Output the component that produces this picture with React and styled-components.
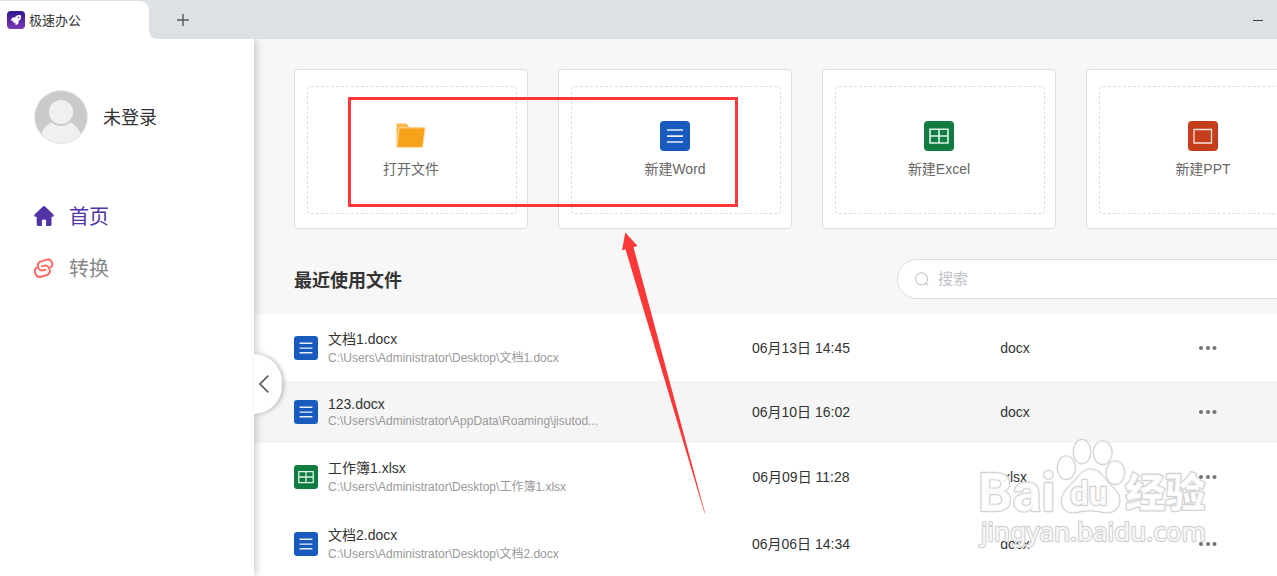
import { useState } from "react";
import { createGlobalStyle, styled } from "styled-components";
import { FaRocket } from "react-icons/fa";

const cards = [
  { type: "folder", label: "打开文件" },
  { type: "word", label: "新建Word" },
  { type: "excel", label: "新建Excel" },
  { type: "ppt", label: "新建PPT" },
];

const files = [
  {
    type: "word",
    name: "文档1.docx",
    path: "C:\\Users\\Administrator\\Desktop\\文档1.docx",
    date: "06月13日 14:45",
    ext: "docx",
  },
  {
    type: "word",
    name: "123.docx",
    path: "C:\\Users\\Administrator\\AppData\\Roaming\\jisutod...",
    date: "06月10日 16:02",
    ext: "docx",
    compact: true,
  },
  {
    type: "excel",
    name: "工作簿1.xlsx",
    path: "C:\\Users\\Administrator\\Desktop\\工作簿1.xlsx",
    date: "06月09日 11:28",
    ext: "xlsx",
  },
  {
    type: "word",
    name: "文档2.docx",
    path: "C:\\Users\\Administrator\\Desktop\\文档2.docx",
    date: "06月06日 14:34",
    ext: "docx",
  },
];

const FileIcon = ({ type, size }) => (
  <StyledIcon width={size} height={size} viewBox="0 0 30 30" aria-hidden="true">
    {type === "folder" && (
      <>
        <path d="M0.5 2.5H10.5L13 6H27V20L26 26.5H0.5Z" fill="#f9b44d" />
        <path
          d="M3 6.8H29.2L26.6 26.3H0.9Z"
          fill="#f6a21b"
          stroke="#fddca6"
          strokeWidth="1"
        />
      </>
    )}
    {type === "word" && (
      <>
        <rect width="30" height="30" rx="4" fill="#185abd" />
        <path
          d="M7 9H23M7 15.2H23M7 21H23"
          stroke="#e8effa"
          strokeWidth="1.7"
        />
      </>
    )}
    {type === "excel" && (
      <>
        <rect width="30" height="30" rx="4" fill="#107c41" />
        <path
          d="M6 8.2H24V22H6ZM15 8V22M6 15H24"
          fill="none"
          stroke="#dff3e7"
          strokeWidth="1.6"
        />
      </>
    )}
    {type === "ppt" && (
      <>
        <rect width="30" height="30" rx="4" fill="#c43e1c" />
        <path
          d="M6 8.5H23.5V22H6Z"
          fill="none"
          stroke="#fbe3da"
          strokeWidth="1.3"
        />
      </>
    )}
  </StyledIcon>
);

const HomeIcon = () => (
  <StyledIcon width="20" height="20" viewBox="0 0 20 20" aria-hidden="true">
    <path
      d="M8.9 0.5Q10 -0.3 11.1 0.5L19.4 8.5Q20.4 10.6 18.4 10.8H17.5V18.6Q17.5 20 16.2 20H12.1V14.6Q12.1 13.6 10 13.6Q7.9 13.6 7.9 14.6V20H4Q2.7 20 2.7 18.6V10.8H1.6Q-0.4 10.6 0.6 8.5Z"
      fill="#5233a3"
    />
  </StyledIcon>
);

const LinkIcon = () => (
  <StyledIcon width="20" height="20" viewBox="0 0 60 60" aria-hidden="true">
    <g fill="none" stroke="#ff6b64" strokeWidth="6" strokeLinecap="round">
      <path d="M50 28C56 25 56 17 52 10C49 4 44 3 37 5L21 10C13 13 10 19 12 27C14 35 20 39 27 37L34 35" />
      <path d="M8 29C2 33 1 39 4 46C7 55 13 58 21 56L36 52C45 49 49 42 47 35C45 26 38 21 30 23L24 25" />
    </g>
  </StyledIcon>
);

const Avatar = () => (
  <StyledIcon width="54" height="54" viewBox="0 0 54 54" aria-hidden="true">
    <clipPath id="face">
      <circle cx="27" cy="27" r="26" />
    </clipPath>
    <circle cx="27" cy="27" r="27" fill="#e8e8e8" />
    <g clipPath="url(#face)">
      <rect width="54" height="54" fill="#cacaca" />
      <ellipse cx="27" cy="51" rx="21" ry="21" fill="#f0f0f0" />
      <circle cx="27" cy="22" r="14" fill="#cacaca" />
      <circle cx="27" cy="22" r="12" fill="#f0f0f0" />
    </g>
  </StyledIcon>
);

const Watermark = () => (
  <StyledWatermark viewBox="30 45 720 345">
    <g
      fill="#fff"
      fillOpacity="0.85"
      stroke="#d2d2d2"
      strokeWidth="7"
      strokeLinejoin="round"
      paintOrder="stroke"
    >
      <text x="54" y="274" fontFamily="Roboto" fontSize="162" fontWeight="700">
        Bai
      </text>
      <ellipse cx="319" cy="143" rx="26" ry="34" />
      <ellipse cx="366" cy="95" rx="25" ry="35" />
      <ellipse cx="428" cy="98" rx="27" ry="34" />
      <ellipse cx="466" cy="158" rx="27" ry="34" />
      <path d="M392 148C365 148 352 178 330 198C310 216 304 235 306 250C310 274 328 280 350 276C375 270 405 270 430 276C460 282 476 265 478 245C480 225 468 212 450 195C430 175 420 148 392 148Z" />
      <text x="330" y="256" fontFamily="Roboto" fontSize="100" fontWeight="700">
        du
      </text>
      <text
        x="496"
        y="262"
        fontFamily="Noto Sans CJK SC"
        fontSize="120"
        fontWeight="900"
      >
        经验
      </text>
      <text
        x="62"
        y="363"
        fontFamily="Noto Sans"
        fontSize="78"
        fontWeight="400"
      >
        jingyan.baidu.com
      </text>
    </g>
  </StyledWatermark>
);

const App = () => {
  const [keyword, setKeyword] = useState("");

  return (
    <StyledApp>
      <GlobalStyle />
      <StyledTabBar>
        <StyledTab>
          <StyledLogo>
            <FaRocket size={10} />
          </StyledLogo>
          <StyledTabTitle>极速办公</StyledTabTitle>
        </StyledTab>
        <StyledBarButton aria-label="新建标签">
          <svg width="12" height="12" viewBox="0 0 12 12">
            <path d="M6 0V12M0 6H12" stroke="#55585c" strokeWidth="1.4" />
          </svg>
        </StyledBarButton>
        <StyledMinimize aria-label="最小化">
          <svg width="10" height="1" viewBox="0 0 10 1">
            <rect width="10" height="1" fill="#3c3f43" />
          </svg>
        </StyledMinimize>
      </StyledTabBar>

      <StyledBody>
        <StyledSidebar>
          <StyledUser>
            <Avatar />
            <span>未登录</span>
          </StyledUser>
          <StyledNav>
            <StyledNavLink href="#home" $active>
              <HomeIcon />
              <span>首页</span>
            </StyledNavLink>
            <StyledNavLink href="#convert">
              <LinkIcon />
              <span>转换</span>
            </StyledNavLink>
          </StyledNav>
          <StyledToggle aria-label="收起">
            <svg width="10" height="18" viewBox="0 0 10 18">
              <path
                d="M9.3 0.6L1 9L9.3 17.4"
                fill="none"
                stroke="#5a5a5a"
                strokeWidth="1.6"
              />
            </svg>
          </StyledToggle>
        </StyledSidebar>

        <StyledMain>
          <StyledCards>
            {cards.map((card) => (
              <StyledCard key={card.type}>
                <StyledCardInner>
                  <FileIcon type={card.type} size={30} />
                  <span>{card.label}</span>
                </StyledCardInner>
              </StyledCard>
            ))}
          </StyledCards>

          <StyledRecent>
            <StyledHeading>最近使用文件</StyledHeading>
            <StyledSearch>
              <svg width="14" height="14" viewBox="0 0 14 14">
                <g fill="none" stroke="#c3c5ca" strokeWidth="1.1">
                  <circle cx="6.6" cy="6.8" r="6" />
                  <path d="M10.8 11.2L13.4 13.6" />
                </g>
              </svg>
              <StyledInput
                type="text"
                aria-label="搜索"
                placeholder="搜索"
                value={keyword}
                onChange={(ev) => setKeyword(ev.target.value)}
              />
            </StyledSearch>
          </StyledRecent>

          <StyledTable>
            <colgroup>
              <StyledCol $width="440px" />
              <StyledCol $width="214px" />
              <StyledCol $width="214px" />
              <StyledCol $width="172px" />
              <col />
            </colgroup>
            <tbody>
              {files
                .filter((file) => file.name.includes(keyword))
                .map((file) => (
                  <StyledRow key={file.name} $hovered={file.compact}>
                    <td>
                      <StyledFile>
                        <FileIcon type={file.type} size={24} />
                        <div>
                          <StyledName $compact={file.compact}>
                            {file.name}
                          </StyledName>
                          <StyledPath $compact={file.compact}>
                            {file.path}
                          </StyledPath>
                        </div>
                      </StyledFile>
                    </td>
                    <StyledCell>{file.date}</StyledCell>
                    <StyledCell>{file.ext}</StyledCell>
                    <StyledCell>
                      <StyledMore aria-label="更多">
                        <svg width="18" height="4" viewBox="0 0 18 4">
                          <g fill="#737373">
                            <circle cx="2" cy="2" r="2" />
                            <circle cx="9" cy="2" r="2" />
                            <circle cx="15.5" cy="2" r="2" />
                          </g>
                        </svg>
                      </StyledMore>
                    </StyledCell>
                    <td />
                  </StyledRow>
                ))}
            </tbody>
          </StyledTable>
        </StyledMain>
      </StyledBody>

      <StyledHighlight />
      <StyledArrow viewBox="0 0 84 282">
        <path
          d="M4.3 0.5L1 18.5L4.5 17.3L83.7 281.5L84 281L12.5 15.2L16.5 14Z"
          fill="#fd3838"
        />
      </StyledArrow>
      <Watermark />
    </StyledApp>
  );
};

const GlobalStyle = createGlobalStyle`
  * {
    box-sizing: border-box;
  }

  body {
    margin: 0;
    font-family: "Liberation Sans", "Noto Sans CJK SC", sans-serif;
    font-size: 14px;
    color: #333;
  }

  button {
    font: inherit;
    border: none;
    background: none;
    padding: 0;
    cursor: pointer;
  }
`;

const StyledApp = styled.div`
  position: relative;
  display: flex;
  flex-direction: column;
  height: 100vh;
  overflow: hidden;
`;

const StyledIcon = styled.svg`
  display: block;
  flex-shrink: 0;
`;

const StyledTabBar = styled.header`
  position: relative;
  z-index: 2;
  display: flex;
  align-items: stretch;
  padding-top: 1px;
  background-color: #dde1e6;
`;

const StyledTab = styled.div`
  position: relative;
  display: flex;
  align-items: center;
  gap: 4px;
  width: 149px;
  height: 38px;
  padding-left: 7px;
  border-radius: 0 9px 0 0;
  background-color: white;
  font-size: 13px;

  /* curved foot of the tab */
  &::after {
    content: "";
    position: absolute;
    left: 100%;
    bottom: 0;
    width: 7px;
    height: 7px;
    background: radial-gradient(circle at 100% 0, transparent 6px, white 7px);
  }
`;

const StyledTabTitle = styled.span`
  padding-bottom: 2px;
`;

const StyledLogo = styled.span`
  display: flex;
  align-items: center;
  justify-content: center;
  width: 18px;
  height: 18px;
  border-radius: 4px;
  color: white;
  background: linear-gradient(#2f1690, #7d3bb4);
`;

const StyledBarButton = styled.button`
  display: flex;
  align-items: center;
  justify-content: center;
  width: 68px;
`;

const StyledMinimize = styled(StyledBarButton)`
  width: 38px;
  margin-left: auto;
`;

const StyledBody = styled.div`
  display: flex;
  flex: 1;
  min-height: 0;
`;

const StyledSidebar = styled.aside`
  position: relative;
  z-index: 1;
  flex: 0 0 254px;
  padding: 51px 34px;
  background-color: white;
  box-shadow: 0 0 10px rgba(0, 0, 0, 0.3);
`;

const StyledUser = styled.div`
  display: flex;
  align-items: center;
  gap: 15px;
  font-size: 18px;

  span {
    padding-bottom: 2px;
  }
`;

const StyledNav = styled.nav`
  display: flex;
  flex-direction: column;
  gap: 20px;
  margin-top: 56px;
`;

const StyledNavLink = styled.a`
  display: flex;
  align-items: center;
  gap: 15px;
  font-size: 20px;
  line-height: 30px;
  text-decoration: none;
  color: ${({ $active }) => ($active ? "#5233a3" : "#888")};

  span {
    padding-top: 2px;
  }
`;

const StyledToggle = styled.button`
  position: absolute;
  top: 315px;
  left: 100%;
  display: flex;
  align-items: center;
  width: 28px;
  height: 60px;
  && {
    padding-left: 5px;
    background-color: white;
  }
  border-radius: 0 30px 30px 0;
  box-shadow: 2px 0 4px rgba(0, 0, 0, 0.25);
`;

const StyledMain = styled.main`
  flex: 1;
  min-width: 1106px;
  background-color: #f7f7f7;
`;

const StyledCards = styled.div`
  display: flex;
  gap: 30px;
  padding: 30px 40px;
`;

const StyledCard = styled.button`
  flex: 1;
  && {
    padding: 16px 10px 14px 12px;
    border: 1px solid #dedfe0;
    background-color: white;
  }
  border-radius: 4px;
  color: #666;
`;

const StyledCardInner = styled.span`
  display: flex;
  flex-direction: column;
  align-items: center;
  justify-content: center;
  gap: 8px;
  height: 128px;
  padding-right: 2px;
  border: 1px dashed #dedfe0;
  border-radius: 4px;
  line-height: 20px;
`;

const StyledRecent = styled.div`
  display: flex;
  align-items: center;
  justify-content: space-between;
  padding: 0 40px 15px;
`;

const StyledHeading = styled.h2`
  margin: 0;
  font-size: 18px;
`;

const StyledSearch = styled.label`
  display: flex;
  align-items: center;
  gap: 9px;
  width: 423px;
  height: 40px;
  padding: 0 17px;
  border: 1px solid #dcdcdc;
  border-radius: 20px;
  background-color: white;
`;

const StyledInput = styled.input`
  flex: 1;
  padding: 0 0 2px;
  border: none;
  outline: none;
  background: none;
  font-family: inherit;
  font-size: 15px;

  &::placeholder {
    color: #bfc1c8;
  }
`;

const StyledTable = styled.table`
  width: 100%;
  table-layout: fixed;
  border-collapse: collapse;
`;

const StyledCol = styled.col`
  width: ${({ $width }) => $width};
`;

const StyledRow = styled.tr`
  background-color: ${({ $hovered }) => ($hovered ? "#f5f5f5" : "white")};

  td {
    padding: 0;
  }
`;

const StyledFile = styled.div`
  display: flex;
  align-items: center;
  gap: 10px;
  padding: 14px 0 14px 40px;
`;

const StyledName = styled.div`
  line-height: ${({ $compact }) => ($compact ? "18px" : "22px")};
`;

const StyledPath = styled.div`
  font-size: 12px;
  line-height: ${({ $compact }) => ($compact ? "16px" : "17px")};
  color: #999;
`;

const StyledCell = styled.td`
  line-height: 18px;
  text-align: center;
`;

const StyledMore = styled.button`
  display: flex;
  margin: 0 auto;
`;

const StyledHighlight = styled.div`
  position: absolute;
  z-index: 3;
  left: 348px;
  top: 97px;
  width: 390px;
  height: 110px;
  border: 3px solid #fd3838;
  pointer-events: none;
`;

const StyledArrow = styled.svg`
  position: absolute;
  z-index: 3;
  left: 621px;
  top: 232px;
  width: 84px;
  height: 282px;
  pointer-events: none;
`;

const StyledWatermark = styled.svg`
  position: absolute;
  z-index: 3;
  left: 970px;
  top: 435px;
  width: 240px;
  height: 115px;
  pointer-events: none;
`;

export default App;
